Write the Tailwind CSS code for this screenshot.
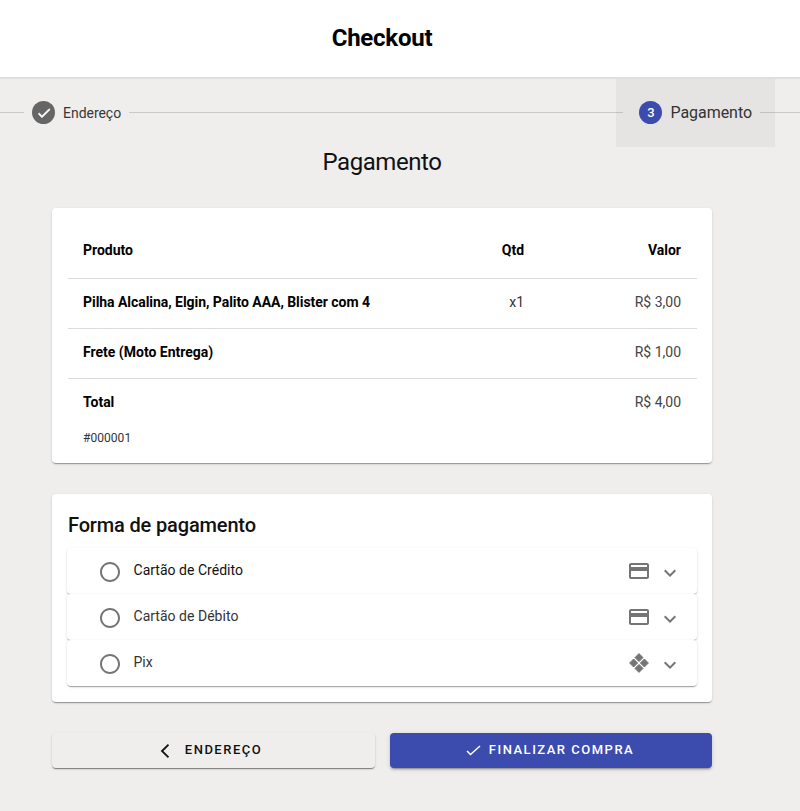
<!DOCTYPE html>
<html lang="pt-BR">
<head>
<meta charset="utf-8">
<title>Checkout</title>
<script src="https://cdn.jsdelivr.net/npm/@tailwindcss/browser@4"></script>
</head>
<body class="bg-[#efeeed] font-['Roboto',sans-serif] text-black h-[811px] overflow-hidden">
<header class="h-[79px] bg-white border-b-2 border-[#dfdfdf] flex items-center justify-center pr-[36px]">
  <h1 class="text-[24px] leading-[32px] font-bold -mt-[2px] tracking-[-0.25px]">Checkout</h1>
</header>

<nav class="h-[68px] flex items-center">
  <div class="w-[24px] h-px bg-[#c9c9c9] -mt-[2px]"></div>
  <div class="flex items-center ml-[8px] -mt-[1px]">
    <span class="w-[23px] h-[23px] rounded-full bg-[#666666] flex items-center justify-center">
      <svg viewBox="0 0 24 24" class="w-[16px] h-[16px] fill-white stroke-white stroke-[1px]"><path d="M9 16.17L4.83 12l-1.42 1.41L9 19 21 7l-1.41-1.41z"/></svg>
    </span>
    <span class="ml-[8px] text-[14px] leading-[20px] text-[#383838] tracking-[-0.03px]">Endereço</span>
  </div>
  <div class="flex-1 mx-[8px] h-px bg-[#c9c9c9] -mt-[2px]"></div>
  <div class="h-[68px] -mx-[15px] px-[23px] bg-black/[0.04] flex items-center relative">
    <span class="w-[23px] h-[23px] rounded-full bg-[#3c4bae] text-white text-[13px] font-medium flex items-center justify-center -mt-[1px]">3</span>
    <span class="ml-[8px] text-[16px] leading-[22px] tracking-[-0.05px] text-[#333333] -mt-[1px]">Pagamento</span>
  </div>
  <div class="w-[40px] h-px bg-[#c9c9c9] -mt-[2px]"></div>
</nav>

<main class="w-[660px] ml-[52px]">
  <h2 class="text-center text-[24px] leading-[32px] mt-[-1px] text-[#111111] tracking-[-0.45px]">Pagamento</h2>

  <section class="mt-[30px] h-[255px] bg-white rounded-[4px] shadow-[0_2px_1px_-1px_rgba(0,0,0,0.2),0_1px_1px_0_rgba(0,0,0,0.14),0_1px_3px_0_rgba(0,0,0,0.12)] pl-[16px] pr-[15px] pt-[15px]">
    <div class="h-[56px] border-b border-[#dcdcdc] flex items-center pl-[15px] pr-[16px] text-[14px] font-bold">
      <span class="flex-1">Produto</span>
      <span class="w-[50px] text-center mr-[110px]">Qtd</span>
      <span>Valor</span>
    </div>
    <div class="h-[50px] pb-[2px] border-b border-[#dcdcdc] flex items-center pl-[15px] pr-[16px] text-[14px]">
      <span class="flex-1 font-bold tracking-[-0.045px]">Pilha Alcalina, Elgin, Palito AAA, Blister com 4</span>
      <span class="w-[50px] text-center mr-[93px] text-[#333333]">x1</span>
      <span class="text-[#444444]">R$ 3,00</span>
    </div>
    <div class="h-[50px] pb-[2px] border-b border-[#dcdcdc] flex items-center pl-[15px] pr-[16px] text-[14px]">
      <span class="flex-1 font-bold">Frete (Moto Entrega)</span>
      <span class="text-[#444444]">R$ 1,00</span>
    </div>
    <div class="h-[50px] pb-[3px] flex items-center pl-[15px] pr-[16px] text-[14px]">
      <span class="flex-1 font-bold">Total</span>
      <span class="text-[#444444]">R$ 4,00</span>
    </div>
    <p class="mt-px pl-[15px] text-[12px] leading-[16px] text-[#333333] tracking-[0.05px]">#000001</p>
  </section>

  <section class="mt-[31px] h-[208px] bg-white rounded-[4px] shadow-[0_2px_1px_-1px_rgba(0,0,0,0.2),0_1px_1px_0_rgba(0,0,0,0.14),0_1px_3px_0_rgba(0,0,0,0.12)] px-[15px] pt-[18px]">
    <h3 class="ml-px text-[20px] leading-[26px] font-medium tracking-[-0.15px] text-[#111111]">Forma de pagamento</h3>
    <div class="mt-[10px] flex flex-col">
      <div class="h-[46px] rounded-[4px] bg-white shadow-[0_2px_1px_-1px_rgba(0,0,0,0.2),0_1px_1px_0_rgba(0,0,0,0.14),0_1px_3px_0_rgba(0,0,0,0.12)] flex items-center pl-[31px] pr-[15px] relative">
        <svg viewBox="0 0 24 24" class="w-[24px] h-[24px] fill-[#757575] mt-[1px]"><path d="M12 2C6.48 2 2 6.48 2 12s4.48 10 10 10 10-4.48 10-10S17.52 2 12 2zm0 18c-4.42 0-8-3.58-8-8s3.58-8 8-8 8 3.58 8 8-3.58 8-8 8z"/></svg>
        <span class="ml-[11.5px] flex-1 text-[14px] leading-[20px] tracking-[0.02px] text-[#111111] -mt-[3px]">Cartão de Crédito</span>
        <svg viewBox="0 0 24 24" class="w-[24px] h-[24px] fill-[#757575]"><path d="M20 4H4c-1.11 0-1.99.89-1.99 2L2 18c0 1.11.89 2 2 2h16c1.11 0 2-.89 2-2V6c0-1.11-.89-2-2-2zm0 14H4v-6h16v6zm0-10H4V6h16v2z"/></svg>
        <svg viewBox="0 0 24 24" class="ml-[7px] w-[24px] h-[24px] fill-[#757575] mt-[3px]"><path d="M16.59 8.59L12 13.17 7.41 8.59 6 10l6 6 6-6z"/></svg>
      </div>
      <div class="h-[46px] rounded-[4px] bg-white shadow-[0_2px_1px_-1px_rgba(0,0,0,0.2),0_1px_1px_0_rgba(0,0,0,0.14),0_1px_3px_0_rgba(0,0,0,0.12)] flex items-center pl-[31px] pr-[15px] relative">
        <svg viewBox="0 0 24 24" class="w-[24px] h-[24px] fill-[#757575] mt-[1px]"><path d="M12 2C6.48 2 2 6.48 2 12s4.48 10 10 10 10-4.48 10-10S17.52 2 12 2zm0 18c-4.42 0-8-3.58-8-8s3.58-8 8-8 8 3.58 8 8-3.58 8-8 8z"/></svg>
        <span class="ml-[11.5px] flex-1 text-[14px] leading-[20px] tracking-[0.02px] text-[#333333] -mt-[3px]">Cartão de Débito</span>
        <svg viewBox="0 0 24 24" class="w-[24px] h-[24px] fill-[#757575]"><path d="M20 4H4c-1.11 0-1.99.89-1.99 2L2 18c0 1.11.89 2 2 2h16c1.11 0 2-.89 2-2V6c0-1.11-.89-2-2-2zm0 14H4v-6h16v6zm0-10H4V6h16v2z"/></svg>
        <svg viewBox="0 0 24 24" class="ml-[7px] w-[24px] h-[24px] fill-[#757575] mt-[3px]"><path d="M16.59 8.59L12 13.17 7.41 8.59 6 10l6 6 6-6z"/></svg>
      </div>
      <div class="h-[46px] rounded-[4px] bg-white shadow-[0_2px_1px_-1px_rgba(0,0,0,0.2),0_1px_1px_0_rgba(0,0,0,0.14),0_1px_3px_0_rgba(0,0,0,0.12)] flex items-center pl-[31px] pr-[15px] relative">
        <svg viewBox="0 0 24 24" class="w-[24px] h-[24px] fill-[#757575] mt-[1px]"><path d="M12 2C6.48 2 2 6.48 2 12s4.48 10 10 10 10-4.48 10-10S17.52 2 12 2zm0 18c-4.42 0-8-3.58-8-8s3.58-8 8-8 8 3.58 8 8-3.58 8-8 8z"/></svg>
        <span class="ml-[11.5px] flex-1 text-[14px] leading-[20px] tracking-[0.02px] text-[#333333] -mt-[3px]">Pix</span>
        <svg viewBox="0 0 24 24" class="w-[24px] h-[24px] fill-[#757575]"><g stroke="#757575" stroke-width="1" stroke-linejoin="round"><path d="M12 2.6L16 6.6 12 10.6 8 6.6z"/><path d="M12 13.4L16 17.4 12 21.4 8 17.4z"/><path d="M6.6 8L10.6 12 6.6 16 2.6 12z"/><path d="M17.4 8L21.4 12 17.4 16 13.4 12z"/></g></svg>
        <svg viewBox="0 0 24 24" class="ml-[7px] w-[24px] h-[24px] fill-[#757575] mt-[3px]"><path d="M16.59 8.59L12 13.17 7.41 8.59 6 10l6 6 6-6z"/></svg>
      </div>
    </div>
  </section>

  <div class="mt-[31px] flex gap-[15px]">
    <button class="w-[323px] h-[35px] pb-[1px] pr-[5px] rounded-[4px] bg-[#efeeed] shadow-[0_2px_1px_-1px_rgba(0,0,0,0.3),0_1px_1px_0_rgba(0,0,0,0.18),0_1px_3px_0_rgba(0,0,0,0.12)] flex items-center justify-center text-[13px] font-medium tracking-[1.5px] text-[#111111]">
      <svg viewBox="0 0 10 14" class="w-[10px] h-[14px] mr-[15px] fill-none stroke-[#111111] stroke-[1.8px] mt-[1px]"><path d="M8.5 0.7L2 7l6.5 6.3"/></svg>
      ENDEREÇO
    </button>
    <button class="w-[322px] h-[35px] pb-[1px] pr-[2px] rounded-[4px] bg-[#3c4bae] shadow-[0_3px_1px_-2px_rgba(0,0,0,0.2),0_2px_2px_0_rgba(0,0,0,0.14),0_1px_5px_0_rgba(0,0,0,0.12)] flex items-center justify-center text-[13px] font-medium tracking-[1.5px] text-white">
      <svg viewBox="0 0 15 11" class="w-[15px] h-[11px] mr-[8px] fill-none stroke-white stroke-[1.5px] mt-[1px]"><path d="M1 6l3.5 3.5L14 1"/></svg>
      FINALIZAR COMPRA
    </button>
  </div>
</main>
</body>
</html>
